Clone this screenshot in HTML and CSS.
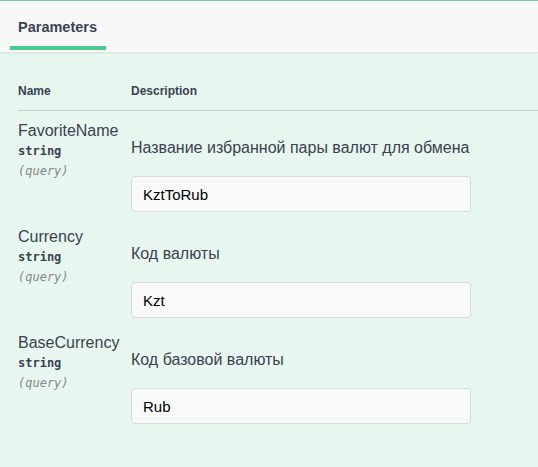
FILE: index.html
```html
<!DOCTYPE html>
<html>
<head>
<meta charset="utf-8">
<link rel="stylesheet" href="styles.css">
</head>
<body>
<div class="opblock">
  <div class="section-header">
    <div class="tab-item">Parameters</div>
  </div>
  <div class="params">
    <div class="params-head">
      <div class="col-name">Name</div>
      <div class="head-desc">Description</div>
    </div>
    <div class="param-row">
      <div class="col-name">
        <div class="param-name">FavoriteName</div>
        <div class="param-type">string</div>
        <div class="param-in">(query)</div>
      </div>
      <div class="col-desc">
        <p class="desc">Название избранной пары валют для обмена</p>
        <input class="param-input" type="text" value="KztToRub">
      </div>
    </div>
    <div class="param-row">
      <div class="col-name">
        <div class="param-name">Currency</div>
        <div class="param-type">string</div>
        <div class="param-in">(query)</div>
      </div>
      <div class="col-desc">
        <p class="desc">Код валюты</p>
        <input class="param-input" type="text" value="Kzt">
      </div>
    </div>
    <div class="param-row">
      <div class="col-name">
        <div class="param-name">BaseCurrency</div>
        <div class="param-type">string</div>
        <div class="param-in">(query)</div>
      </div>
      <div class="col-desc">
        <p class="desc">Код базовой валюты</p>
        <input class="param-input" type="text" value="Rub">
      </div>
    </div>
  </div>
</div>
</body>
</html>
```

FILE: styles.css
```css
html, body {
  margin: 0;
  padding: 0;
  background: #e8f6f0;
}
body {
  font-family: "Liberation Sans", Arial, sans-serif;
  color: #3b4151;
  height: 467px;
  overflow: hidden;
}
.opblock {
  border-top: 1px solid #6fcf9f;
  background: #e8f6f0;
  min-height: 466px;
}
.section-header {
  height: 51px;
  background: #f8f8f8;
  box-shadow: 0 1px 2px rgba(0, 0, 0, 0.1);
  padding-left: 10px;
  display: flex;
  align-items: flex-start;
}
.tab-item {
  width: 96px;
  box-sizing: border-box;
  padding-left: 8px;
  padding-top: 18px;
  height: 49px;
  font-size: 14.5px;
  line-height: 17px;
  font-weight: bold;
  color: #3b4151;
  border-bottom: 4px solid #49cc90;
}
.params {
  padding: 20px 0 0 18px;
}
.params-head {
  display: flex;
  padding: 12px 0 11px;
  border-bottom: 1px solid #c5cfca;
  font-size: 12px;
  line-height: 15px;
  font-weight: bold;
}
.col-name {
  width: 113px;
  flex: none;
}
.head-desc {
  flex: 1;
}
.col-desc {
  flex: 1;
  padding-top: 17px;
}
.param-row {
  display: flex;
  height: 106px;
  box-sizing: border-box;
  padding-top: 10px;
}
.param-name {
  font-size: 16px;
  line-height: 19px;
}
.param-type {
  font-family: "DejaVu Sans Mono", "Liberation Mono", monospace;
  font-size: 12px;
  font-weight: bold;
  line-height: 20px;
  margin-top: 1px;
}
.param-in {
  font-family: "DejaVu Sans Mono", "Liberation Mono", monospace;
  font-size: 12px;
  font-style: italic;
  color: #888;
  line-height: 20px;
}
.desc {
  margin: 0;
  font-size: 16px;
  line-height: 19px;
}
.param-input {
  display: block;
  margin-top: 19px;
  width: 340px;
  height: 36px;
  box-sizing: border-box;
  padding: 0 11px;
  border: 1px solid #d9d9d9;
  border-radius: 4px;
  background: #f8faf9;
  font-family: "Liberation Sans", Arial, sans-serif;
  font-size: 15px;
  color: #000;
  outline: none;
}
```
